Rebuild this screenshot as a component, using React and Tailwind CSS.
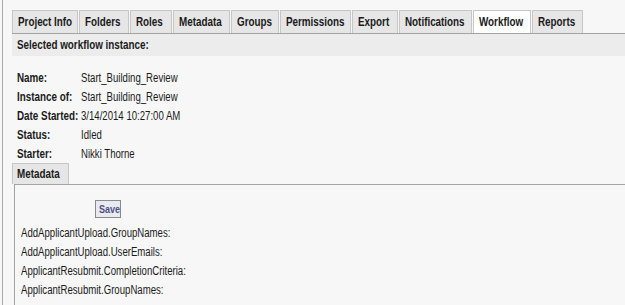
import React from "react";

const tabs = [
  ["Project Info", 66],
  ["Folders", 50],
  ["Roles", 42],
  ["Metadata", 57],
  ["Groups", 48],
  ["Permissions", 71],
  ["Export", 46],
  ["Notifications", 73],
  ["Workflow", 58],
  ["Reports", 51],
];

const rows = [
  ["Name:", "Start_Building_Review"],
  ["Instance of:", "Start_Building_Review"],
  ["Date Started:", "3/14/2014 10:27:00 AM"],
  ["Status:", "Idled"],
  ["Starter:", "Nikki Thorne"],
];

const meta = [
  "AddApplicantUpload.GroupNames:",
  "AddApplicantUpload.UserEmails:",
  "ApplicantResubmit.CompletionCriteria:",
  "ApplicantResubmit.GroupNames:",
];

function T({ children }) {
  return (
    <span className="inline-block origin-left scale-x-[0.8] whitespace-nowrap">{children}</span>
  );
}

function B({ children }) {
  return (
    <span className="inline-block origin-left scale-x-[0.82] whitespace-nowrap font-bold">{children}</span>
  );
}

export default function App() {
  return (
    <div
      className="w-[625px] h-[305px] overflow-hidden bg-[#f7f7f7] pl-[2px] text-[12px] text-[#1a1a1a]"
      style={{ fontFamily: '"Liberation Sans", Arial, sans-serif' }}
    >
      <div className="h-full border-l border-[#a9a9a9] pl-[9px] pt-[10px]">
        <div className="flex">
          {tabs.map(([t, w]) => (
            <div
              key={t}
              style={{ width: w }}
              className={
                "h-[23px] mr-[1px] border border-b-0 border-[#c6c6c6] px-[5px] leading-[22px] whitespace-nowrap " +
                (t === "Workflow" ? "bg-white" : "bg-[#e6e6e6]")
              }
            >
              <B>{t}</B>
            </div>
          ))}
        </div>
        <div className="border-t border-[#a3a3a3]">
          <div className="h-[22px] bg-[#ececec] pl-[5px] leading-[22px]">
            <B>Selected workflow instance:</B>
          </div>
          <div className="pt-[13px] pl-[5px]">
            {rows.map(([l, v]) => (
              <div key={l} className="flex h-[19px] leading-[19px]">
                <div className="w-[64px]">
                  <B>{l}</B>
                </div>
                <div>
                  <T>{v}</T>
                </div>
              </div>
            ))}
          </div>
          <div className="mt-[-1px] w-[57px] h-[21px] border border-[#c6c6c6] border-b-0 bg-[#e6e6e6] pl-[4px] leading-[20px]">
            <B>Metadata</B>
          </div>
          <div className="ml-[2px] h-[200px] border border-r-0 border-[#a3a3a3] pl-[6px] pt-[15px]">
            <div className="ml-[74px] w-[26px] h-[18px] border border-[#8a8a8a] bg-[#e9e9f1] pl-[3px] text-[11px] leading-[16px] text-[#4f5383]">
              <B>Save</B>
            </div>
            <div className="pt-[6px]">
              {meta.map((m) => (
                <div key={m} className="h-[19px] leading-[19px]">
                  <T>{m}</T>
                </div>
              ))}
            </div>
          </div>
        </div>
      </div>
    </div>
  );
}
